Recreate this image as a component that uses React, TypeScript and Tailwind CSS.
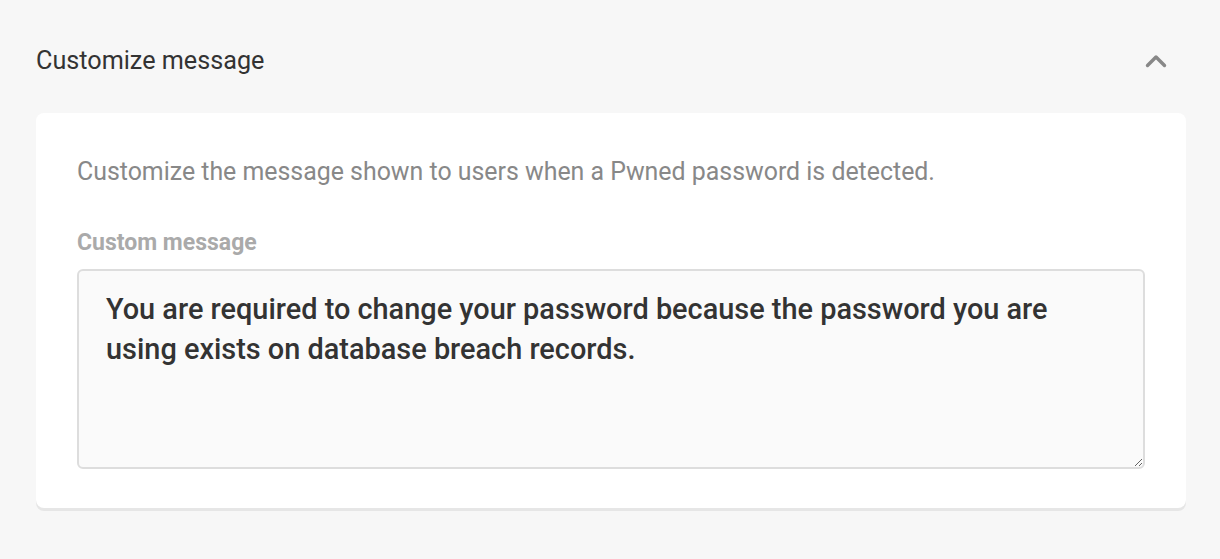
import React from "react";

export default function App() {
  return (
    <div className="min-h-[559px] w-full bg-[#f7f7f7] pl-9 pr-[34px] pt-[38px] pb-12" style={{ fontFamily: "Roboto, sans-serif" }}>
      <div className="flex items-center justify-between pr-[19px]">
        <h2 className="text-[25.2px] leading-[46px] text-[#333] font-normal">Customize message</h2>
        <svg width="22" height="14" viewBox="0 0 22 14" className="text-[#888]">
          <path d="M2.5 11.5 L11 3 L19.5 11.5" fill="none" stroke="currentColor" strokeWidth="3.4" strokeLinecap="round" strokeLinejoin="round" />
        </svg>
      </div>
      <div className="mt-[29px] rounded-lg bg-white px-[41px] pt-[43px] pb-[39px] shadow-[0_3px_0_#e6e6e6]">
        <p className="text-[24.9px] leading-[32px] text-[#888]">
          Customize the message shown to users when a Pwned password is detected.
        </p>
        <label className="mt-[40px] block text-[23px] font-bold leading-[30px] text-[#aaa]">Custom message</label>
        <textarea
          className="mt-[11px] block h-[200px] w-full resize-y rounded-md border-2 border-[#dddddd] bg-[#fafafa] px-[27px] pt-[18px] text-[28.9px] font-medium leading-[40px] text-[#333] outline-none"
          defaultValue="You are required to change your password because the password you are using exists on database breach records."
        />
      </div>
    </div>
  );
}
